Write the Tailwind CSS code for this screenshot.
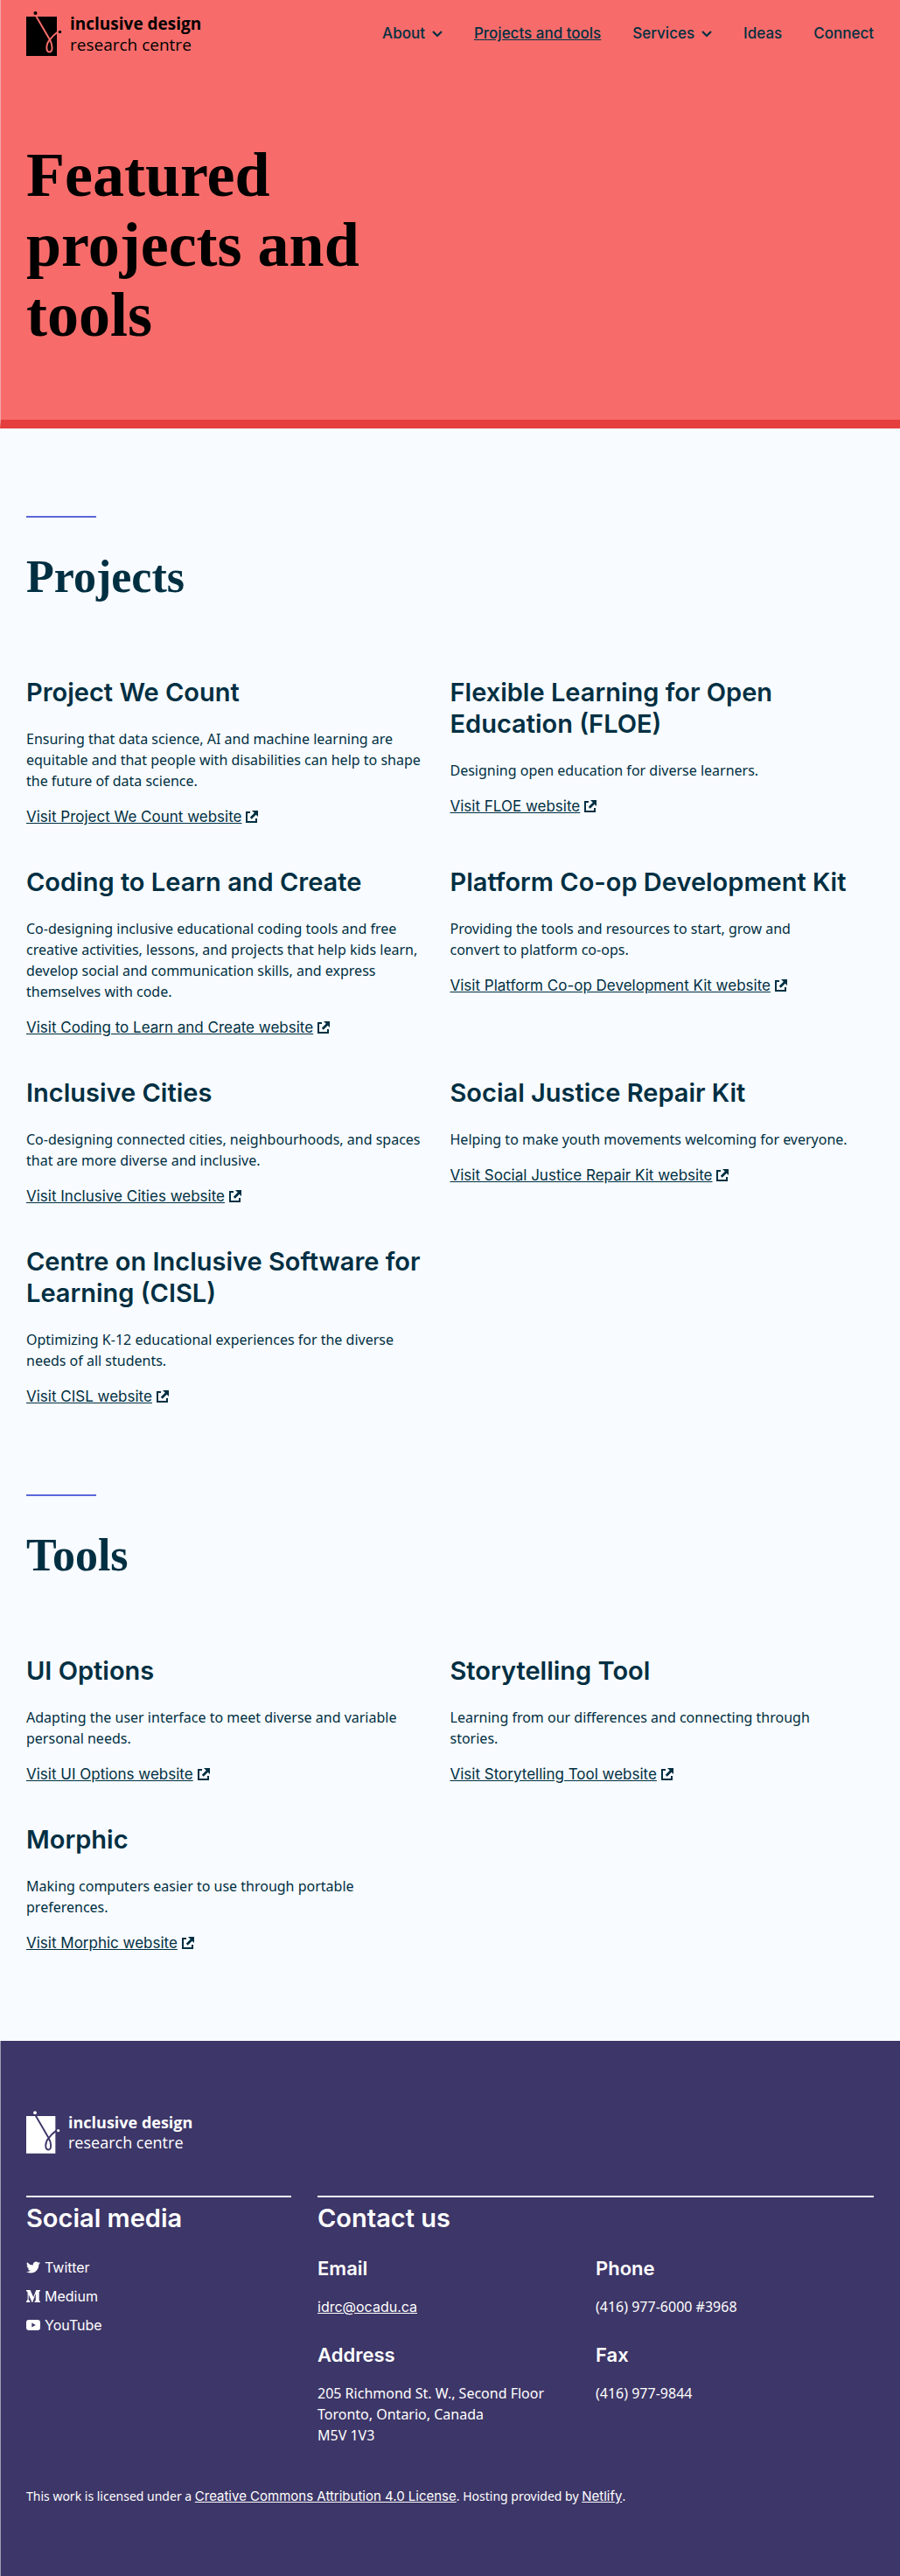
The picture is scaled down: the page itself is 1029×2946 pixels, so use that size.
<!DOCTYPE html>
<html lang="en">
<head>
<meta charset="utf-8">
<meta name="viewport" content="width=device-width, initial-scale=1">
<title>Featured projects and tools</title>
<script src="https://cdn.jsdelivr.net/npm/@tailwindcss/browser@4"></script>
</head>
<body class="bg-[#f8fbff] font-['Noto_Sans',sans-serif] text-base text-[#002f42]">
<svg class="hidden" aria-hidden="true">
  <symbol id="ext" viewBox="0 0 16 16"><path d="M6 3H2v11h11v-4" fill="none" stroke="currentColor" stroke-width="2"/><path d="M8 1h7v7l-2.300-2.300-5 5-1.900-1.900 5-5z" fill="currentColor"/></symbol>
  <symbol id="mark" viewBox="0 0 42 52"><path d="M0 6h35v45H0z" fill="currentColor"/><path d="M11 5 27 32.500c3 5 4 14-.500 14s-4-9.500.5-14c2-3 5-6 9-9" fill="none" stroke="var(--mark-line)" stroke-width="2"/><circle cx="10.500" cy="2" r="2" fill="currentColor"/><circle cx="38.500" cy="23.500" r="1.700" fill="currentColor"/></symbol>
  <symbol id="chev" viewBox="0 0 12 8"><path d="m1 1 5 5 5-5" fill="none" stroke="currentColor" stroke-width="2.200"/></symbol>
</svg>

<header class="border-b-10 border-l border-b-[#e53e3e] border-l-[#f3a5ab] bg-[#f76c6a] pr-[30px] pb-20 pl-[29px] text-black">
  <div class="flex h-[78px] items-center justify-between">
    <a href="#" class="flex items-center gap-2 [--mark-line:#f76c6a]">
      <svg class="h-[52px] w-[42px]"><use href="#mark"/></svg>
      <span class="font-['Open_Sans',sans-serif] text-[19px] leading-6"><b class="block">inclusive design</b>research centre</span>
    </a>
    <nav class="flex items-center gap-9 font-['Inter',sans-serif] text-[17px] font-medium text-[#002f42]">
      <button class="flex items-center gap-2">About <svg class="h-2 w-3"><use href="#chev"/></svg></button>
      <a href="#" class="underline">Projects and tools</a>
      <button class="flex items-center gap-2">Services <svg class="h-2 w-3"><use href="#chev"/></svg></button>
      <a href="#">Ideas</a>
      <a href="#">Connect</a>
    </nav>
  </div>
  <h1 class="mt-[82px] max-w-[450px] font-['Liberation_Serif',serif] text-7xl leading-20 font-bold">Featured projects and tools</h1>
</header>

<main class="px-[30px] pt-[100px] pb-[55px]">
  <section>
    <div class="h-0.5 w-20 bg-[#5a67d8]"></div>
    <h2 class="mt-9 font-['Liberation_Serif',serif] text-[52px] leading-16 font-bold">Projects</h2>
    <div class="mt-[82px] grid grid-cols-2">
      <article class="pr-6 pb-[45px]">
        <h3 class="font-['Inter',sans-serif] text-[29px] leading-9 font-semibold">Project We Count</h3>
        <p class="mt-[23px] mb-[17px]">Ensuring that data science, AI and machine learning are equitable and that people with disabilities can help to shape the future of data science.</p>
        <a href="#" class="flex items-center gap-1 font-['Inter',sans-serif] text-[17px] leading-6"><span class="underline">Visit Project We Count website</span><svg class="size-4"><use href="#ext"/></svg></a>
      </article>
      <article class="pr-6 pb-[45px]">
        <h3 class="font-['Inter',sans-serif] text-[29px] leading-9 font-semibold">Flexible Learning for Open Education (FLOE)</h3>
        <p class="mt-[23px] mb-[17px]">Designing open education for diverse learners.</p>
        <a href="#" class="flex items-center gap-1 font-['Inter',sans-serif] text-[17px] leading-6"><span class="underline">Visit FLOE website</span><svg class="size-4"><use href="#ext"/></svg></a>
      </article>
      <article class="pr-6 pb-[45px]">
        <h3 class="font-['Inter',sans-serif] text-[29px] leading-9 font-semibold">Coding to Learn and Create</h3>
        <p class="mt-[23px] mb-[17px]">Co-designing inclusive educational coding tools and free creative activities, lessons, and projects that help kids learn, develop social and communication skills, and express themselves with code.</p>
        <a href="#" class="flex items-center gap-1 font-['Inter',sans-serif] text-[17px] leading-6"><span class="underline">Visit Coding to Learn and Create website</span><svg class="size-4"><use href="#ext"/></svg></a>
      </article>
      <article class="pr-6 pb-[45px]">
        <h3 class="font-['Inter',sans-serif] text-[29px] leading-9 font-semibold">Platform Co-op Development Kit</h3>
        <p class="mt-[23px] mb-[17px]">Providing the tools and resources to start, grow and convert&nbsp;to platform co-ops.</p>
        <a href="#" class="flex items-center gap-1 font-['Inter',sans-serif] text-[17px] leading-6"><span class="underline">Visit Platform Co-op Development Kit website</span><svg class="size-4"><use href="#ext"/></svg></a>
      </article>
      <article class="pr-6 pb-[45px]">
        <h3 class="font-['Inter',sans-serif] text-[29px] leading-9 font-semibold">Inclusive Cities</h3>
        <p class="mt-[23px] mb-[17px]">Co-designing connected cities, neighbourhoods, and spaces that are more diverse and inclusive.</p>
        <a href="#" class="flex items-center gap-1 font-['Inter',sans-serif] text-[17px] leading-6"><span class="underline">Visit Inclusive Cities website</span><svg class="size-4"><use href="#ext"/></svg></a>
      </article>
      <article class="pr-6 pb-[45px]">
        <h3 class="font-['Inter',sans-serif] text-[29px] leading-9 font-semibold">Social Justice Repair Kit</h3>
        <p class="mt-[23px] mb-[17px]">Helping to make youth movements welcoming for everyone.</p>
        <a href="#" class="flex items-center gap-1 font-['Inter',sans-serif] text-[17px] leading-6"><span class="underline">Visit Social Justice Repair Kit website</span><svg class="size-4"><use href="#ext"/></svg></a>
      </article>
      <article class="pr-6 pb-[45px]">
        <h3 class="font-['Inter',sans-serif] text-[29px] leading-9 font-semibold">Centre on Inclusive Software for Learning (CISL)</h3>
        <p class="mt-[23px] mb-[17px]">Optimizing K-12 educational experiences for the diverse needs of all students.</p>
        <a href="#" class="flex items-center gap-1 font-['Inter',sans-serif] text-[17px] leading-6"><span class="underline">Visit CISL website</span><svg class="size-4"><use href="#ext"/></svg></a>
      </article>
    </div>
  </section>
  <section class="mt-[55px]">
    <div class="h-0.5 w-20 bg-[#5a67d8]"></div>
    <h2 class="mt-9 font-['Liberation_Serif',serif] text-[52px] leading-16 font-bold">Tools</h2>
    <div class="mt-[82px] grid grid-cols-2">
      <article class="pr-6 pb-[45px]">
        <h3 class="font-['Inter',sans-serif] text-[29px] leading-9 font-semibold">UI Options</h3>
        <p class="mt-[23px] mb-[17px]">Adapting the user interface to meet diverse and variable personal needs.</p>
        <a href="#" class="flex items-center gap-1 font-['Inter',sans-serif] text-[17px] leading-6"><span class="underline">Visit UI Options website</span><svg class="size-4"><use href="#ext"/></svg></a>
      </article>
      <article class="pr-6 pb-[45px]">
        <h3 class="font-['Inter',sans-serif] text-[29px] leading-9 font-semibold">Storytelling Tool</h3>
        <p class="mt-[23px] mb-[17px]">Learning from our differences and connecting through stories.</p>
        <a href="#" class="flex items-center gap-1 font-['Inter',sans-serif] text-[17px] leading-6"><span class="underline">Visit Storytelling Tool website</span><svg class="size-4"><use href="#ext"/></svg></a>
      </article>
      <article class="pr-6 pb-[45px]">
        <h3 class="font-['Inter',sans-serif] text-[29px] leading-9 font-semibold">Morphic</h3>
        <p class="mt-[23px] mb-[17px]">Making computers easier to use through portable preferences.</p>
        <a href="#" class="flex items-center gap-1 font-['Inter',sans-serif] text-[17px] leading-6"><span class="underline">Visit Morphic website</span><svg class="size-4"><use href="#ext"/></svg></a>
      </article>
    </div>
  </section>
</main>

<footer class="border-l border-[#9e9bb4] bg-[#3d3668] py-20 pr-[30px] pl-[29px] text-white">
  <a href="#" class="flex items-center gap-2 [--mark-line:#3d3668]">
    <svg class="h-[50px] w-10"><use href="#mark"/></svg>
    <span class="font-['Open_Sans',sans-serif] text-lg leading-[23px]"><b class="block">inclusive design</b>research centre</span>
  </a>
  <div class="mt-[47px] grid grid-cols-3 gap-[30px]">
    <section class="border-t-2 pt-1.5">
      <h2 class="font-['Inter',sans-serif] text-[29px] leading-9 font-semibold">Social media</h2>
      <ul class="mt-[26px] grid gap-[9px] font-['Inter',sans-serif]">
        <li><a href="#" class="flex items-center gap-[5px]"><svg class="size-4" viewBox="0 0 24 24" fill="currentColor"><path d="M23.950 4.600a10 10 0 0 1-2.800.8 4.900 4.900 0 0 0 2.100-2.700 9.900 9.900 0 0 1-3.100 1.200 4.900 4.900 0 0 0-8.400 4.500A14 14 0 0 1 1.700 3.200a4.900 4.900 0 0 0 1.500 6.500 4.900 4.900 0 0 1-2.200-.6v.1a4.900 4.900 0 0 0 3.900 4.800 5 5 0 0 1-2.200.1 4.900 4.900 0 0 0 4.600 3.400A9.900 9.900 0 0 1 0 19.500 14 14 0 0 0 7.500 21.700c9.100 0 14-7.500 14-14v-.6a10 10 0 0 0 2.450-2.500z"/></svg>Twitter</a></li>
        <li><a href="#" class="flex items-center gap-[5px]"><svg class="size-4" viewBox="0 0 16 16" fill="currentColor"><path d="M0 1h4.600l3.600 8L11.300 1H16v1l-1.300 1v10l1.300 1v1H9.500v-1l1.300-1V5L7.200 15h-.6L2.700 6v6l1.700 2v1H0v-1l1.600-2V3.500L0 2z"/></svg>Medium</a></li>
        <li><a href="#" class="flex items-center gap-[5px]"><svg class="size-4" viewBox="0 0 16 16"><rect y="2" width="16" height="12" rx="3" fill="currentColor"/><path d="m6.300 5.500 4.500 2.500-4.500 2.500z" fill="#3d3668"/></svg>YouTube</a></li>
      </ul>
    </section>
    <section class="col-span-2 border-t-2 pt-1.5">
      <h2 class="font-['Inter',sans-serif] text-[29px] leading-9 font-semibold">Contact us</h2>
      <div class="mt-[25px] grid grid-cols-2">
        <div>
          <h3 class="font-['Inter',sans-serif] text-[22px] leading-7 font-semibold">Email</h3>
          <p class="mt-[18px] mb-[29px]"><a href="#" class="font-['Inter',sans-serif] underline">idrc@ocadu.ca</a></p>
          <h3 class="font-['Inter',sans-serif] text-[22px] leading-7 font-semibold">Address</h3>
          <p class="mt-[18px]">205 Richmond St. W., Second Floor<br>Toronto, Ontario, Canada<br>M5V 1V3</p>
        </div>
        <div>
          <h3 class="font-['Inter',sans-serif] text-[22px] leading-7 font-semibold">Phone</h3>
          <p class="mt-[18px] mb-[29px]">(416) 977-6000 #3968</p>
          <h3 class="font-['Inter',sans-serif] text-[22px] leading-7 font-semibold">Fax</h3>
          <p class="mt-[18px]">(416) 977-9844</p>
        </div>
      </div>
    </section>
  </div>
  <p class="mt-[47px] text-sm leading-[22px]">This work is licensed under a <a href="#" class="font-['Inter',sans-serif] text-[15px] underline">Creative Commons Attribution 4.0 License</a>. Hosting provided by <a href="#" class="font-['Inter',sans-serif] text-[15px] underline">Netlify</a>.</p>
</footer>
</body>
</html>
